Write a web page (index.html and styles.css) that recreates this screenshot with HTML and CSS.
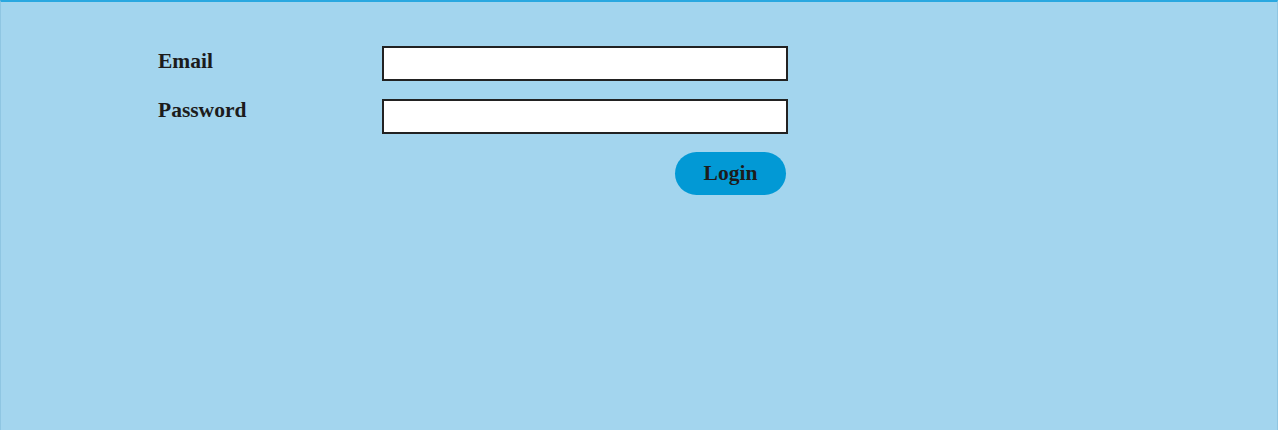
FILE: index.html
```html
<!DOCTYPE html>
<html lang="en">
<head>
<meta charset="utf-8">
<title>Login</title>
<link rel="stylesheet" href="styles.css">
</head>
<body>
<div class="frame">
  <form class="login-form">
    <label class="field-label" for="email">Email</label>
    <input class="field-input" id="email" type="email">
    <label class="field-label field-label--second" for="password">Password</label>
    <input class="field-input" id="password" type="password">
    <button class="login-btn" type="button">Login</button>
  </form>
</div>
</body>
</html>
```

FILE: styles.css
```css
* { box-sizing: border-box; }

html, body {
  margin: 0;
  padding: 0;
  height: 100%;
}

body {
  background: #ffffff;
  font-family: "Liberation Serif", "Times New Roman", serif;
  color: #1c1c1c;
}

.frame {
  width: 1278px;
  height: 430px;
  background: #a3d5ee;
  border-top: 2px solid #2aa8e0;
  border-left: 1px solid #8fc6e2;
  border-right: 1px solid #8fc6e2;
  padding: 44px 0 0 157px;
}

.login-form {
  display: grid;
  grid-template-columns: 224px 406px;
  row-gap: 18px;
  align-items: start;
}

.field-label {
  font-size: 21.5px;
  font-weight: bold;
  line-height: 31px;
  color: #1c1c1c;
}

.field-label--second {
  margin-top: -4px;
}

.field-input {
  height: 35px;
  width: 406px;
  margin: 0;
  background: #ffffff;
  border: 2px solid #222222;
  border-radius: 0;
  outline: none;
}

.login-btn {
  grid-column: 2;
  justify-self: end;
  margin-right: 2px;
  width: 111px;
  height: 43px;
  padding: 0;
  border: none;
  border-radius: 22px;
  background: #0299d5;
  font-family: "Liberation Serif", "Times New Roman", serif;
  font-size: 21.5px;
  font-weight: bold;
  line-height: 43px;
  color: #1c1c1c;
  cursor: pointer;
}
```
